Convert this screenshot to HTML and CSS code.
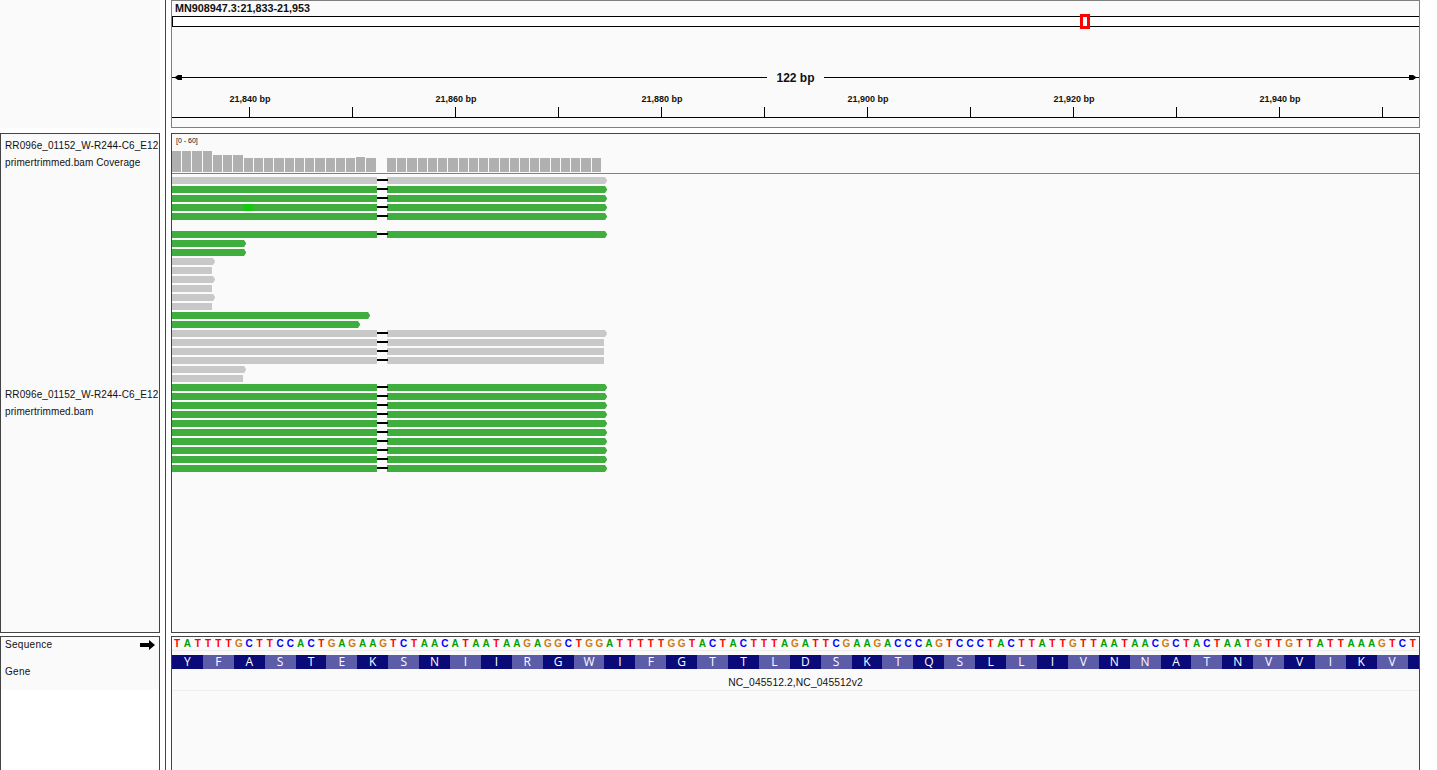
FILE: index.html
```html
<!DOCTYPE html>
<html>
	<head>
		<meta charset="utf-8"/>
		<title>MN908947.3:21,833-21,953</title>
		<link rel="stylesheet" href="styles.css">
	</head>
	<body>
		<div id="app">
			<div id="nameCol">
				<div class="namePanel headerName"></div>
				<div class="namePanel mainName">
					<div class="trackName coverageName">
						<div class="nameClip">RR096e_01152_W-R244-C6_E12</div>
						<div class="nameClip">primertrimmed.bam Coverage</div>
					</div>
					<div class="trackName readsName">
						<div class="nameClip">RR096e_01152_W-R244-C6_E12</div>
						<div class="nameClip">primertrimmed.bam</div>
					</div>
				</div>
				<div class="namePanel bottomName">
					<div class="bottomLabels">
						<div class="seqName">
							<span>Sequence</span>
							<svg class="strandArrow" width="15" height="10" viewBox="0 0 15 10"><path d="M0 3H9V0L15 5L9 10V7H0Z"/></svg>
						</div>
						<div class="geneName">Gene</div>
					</div>
				</div>
			</div>
			<div id="divider"></div>
			<div id="dataCol">
				<div class="dataPanel headerPanel">
					<div class="locus">MN908947.3:21,833-21,953</div>
					<div class="ideogram"><div class="ideogramBox"></div></div>
					<div class="span">
						<svg class="spanEnd" width="10" height="7" viewBox="0 0 10 7"><path d="M0 3H3L6 1H10V6H6L3 4H0Z"/></svg>
						<div class="spanLine"></div>
						<div class="spanLabel">122 bp</div>
						<div class="spanLine"></div>
						<svg class="spanEnd" width="10" height="7" viewBox="0 0 10 7"><path d="M10 3H7L4 1H0V6H4L7 4H10Z"/></svg>
					</div>
					<div class="rulerLabels">
						<div class="rulerLabel">21,840 bp</div>
						<div class="rulerLabel">21,860 bp</div>
						<div class="rulerLabel">21,880 bp</div>
						<div class="rulerLabel">21,900 bp</div>
						<div class="rulerLabel">21,920 bp</div>
						<div class="rulerLabel">21,940 bp</div>
					</div>
					<div class="rulerTicks">
						<div class="tick"></div><div class="tick"></div><div class="tick"></div><div class="tick"></div>
						<div class="tick"></div><div class="tick"></div><div class="tick"></div><div class="tick"></div>
						<div class="tick"></div><div class="tick"></div><div class="tick"></div><div class="tick"></div>
					</div>
				</div>
				<div class="dataPanel mainPanel">
					<div class="coverage">
						<div class="coverageRange">[0 - 60]</div>
						<div id="coverageBars"></div>
					</div>
					<div id="reads"></div>
				</div>
				<div class="dataPanel bottomPanel">
					<div id="sequence"></div>
					<div id="aminoAcids"></div>
					<div class="geneTrack">NC_045512.2,NC_045512v2</div>
				</div>
			</div>
		</div>
		<script src="tracks.js"></script>
	</body>
</html>
```

FILE: styles.css
```css
/*main layout*/
html, body{
	margin: 0;
	padding: 0;
	height: 100%;
	overflow: hidden;
	background-color: #ffffff;
}
#app{
	display: flex;
	height: 770px;
	overflow: hidden;
	font-family: "Liberation Sans", Arial, sans-serif;
	color: #111111;
}
#nameCol{
	width: 160px;
	flex: none;
}
#divider{
	width: 1px;
	flex: none;
	margin: 0 5px;
	background-color: #444444;
}
#dataCol{
	width: 1249px;
	flex: none;
}

/*panels*/
.namePanel, .dataPanel{
	box-sizing: border-box;
}
.namePanel{
	background-color: #fafafa;
}
.dataPanel{
	background-color: #fafafa;
	border: solid 1px #444444;
}
.headerName{
	height: 128px;
	margin-bottom: 5px;
}
.mainName{
	display: flex;
	flex-direction: column;
	height: 500px;
	margin-bottom: 3px;
	border: solid 1px #444444;
}
.bottomName{
	height: 136px;
	background-color: #ffffff;
	border: solid 1px #444444;
}
.headerPanel{
	height: 128px;
	margin-bottom: 5px;
	border-color: #808080;
}
.mainPanel{
	height: 500px;
	margin-bottom: 3px;
}
.bottomPanel{
	height: 136px;
}

/*track names*/
.trackName{
	display: flex;
	flex-direction: column;
	justify-content: center;
	padding-left: 4px;
	font-size: 10px;
	letter-spacing: 0.1px;
	line-height: 17px;
}
.coverageName{
	height: 39px;
}
.readsName{
	flex: 1;
}
.nameClip{
	white-space: nowrap;
	overflow: hidden;
}
.bottomLabels{
	height: 53px;
	padding: 0 4px;
	background-color: #fafafa;
	font-size: 10px;
	letter-spacing: 0.3px;
}
.seqName{
	display: flex;
	justify-content: space-between;
	align-items: flex-start;
	height: 26px;
	padding-top: 2px;
	line-height: 12px;
	box-sizing: border-box;
}
.strandArrow{
	margin-top: 1px;
}
.geneName{
	line-height: 12px;
	padding-top: 3px;
}

/*header: locus, ideogram, span, ruler*/
.locus{
	height: 15px;
	padding-left: 3px;
	font-size: 10.8px;
	font-weight: bold;
	line-height: 14px;
}
.ideogram{
	position: relative;
	box-sizing: border-box;
	height: 11px;
	background-color: #ffffff;
	border-top: solid 1px #000000;
	border-bottom: solid 1px #000000;
	border-left: solid 1px #000000;
}
.ideogramBox{
	position: absolute;
	left: 907px;
	top: -3px;
	box-sizing: border-box;
	width: 10px;
	height: 15px;
	border: solid 3px #ff0000;
}
.span{
	display: flex;
	align-items: center;
	height: 15px;
	margin-top: 43px;
}
.spanEnd{
	flex: none;
}
.spanLine{
	flex: 1;
	height: 1px;
	background-color: #000000;
}
.spanLabel{
	width: 57px;
	flex: none;
	text-align: center;
	font-size: 12px;
	font-weight: bold;
}
.rulerLabels{
	display: flex;
	height: 11px;
	margin-top: 9px;
	margin-left: -26px;
	padding-left: 1px;
}
.rulerLabel{
	width: 206px;
	flex: none;
	text-align: center;
	font-size: 9px;
	font-weight: bold;
	line-height: 11px;
}
.rulerTicks{
	display: flex;
	box-sizing: border-box;
	height: 11px;
	margin-top: 2px;
	padding-left: 77px;
	border-bottom: solid 1px #000000;
}
.tick{
	width: 103px;
	flex: none;
	box-sizing: border-box;
	height: 10px;
	border-left: solid 1px #000000;
}

/*coverage*/
.coverage{
	display: flex;
	flex-direction: column;
	box-sizing: border-box;
	height: 40px;
	padding-bottom: 1px;
	border-bottom: solid 1px #808080;
}
.coverageRange{
	height: 10px;
	padding: 2px 0 0 4px;
	font-size: 7px;
	line-height: 9px;
}
#coverageBars{
	display: flex;
	align-items: flex-end;
	gap: 1px;
	flex: 1;
}
.covBar{
	width: 9.24px;
	flex: none;
	background-color: #b0b0b0;
}

/*reads*/
#reads{
	padding-top: 3px;
}
.read{
	display: flex;
	height: 7px;
	margin-bottom: 2px;
}
.seg{
	position: relative;
	height: 7px;
	flex: none;
}
.green .seg{ background-color: #3fae3f;}
.gray .seg{ background-color: #c8c8c8;}
.green .tip{ background-color: #3fae3f;}
.gray .tip{ background-color: #c8c8c8;}
.tip{
	width: 3px;
	height: 7px;
	flex: none;
	clip-path: polygon(0 0, 34% 0, 100% 43%, 100% 57%, 34% 100%, 0 100%);
}
.gapLine{
	position: relative;
	z-index: 1;
	width: 11px;
	height: 2px;
	flex: none;
	margin: 2px -1px 0 0;
	background-color: #000000;
}
.mismatch{
	position: absolute;
	left: 71px;
	top: 0;
	width: 10px;
	height: 7px;
	background-color: #12c912;
}

/*sequence and amino acids*/
#sequence{
	display: flex;
	box-sizing: border-box;
	height: 14px;
	padding-top: 1px;
	border-bottom: solid 1px #eeeeee;
	font-size: 10px;
	font-weight: bold;
	line-height: 12px;
}
.base{
	width: 10.3px;
	flex: none;
	text-align: center;
}
.baseT{ color: #ff0000;}
.baseA{ color: #00a000;}
.baseC{ color: #0000ff;}
.baseG{ color: #d17a10;}
#aminoAcids{
	display: flex;
	height: 14px;
	margin-top: 4px;
	font-family: "Open Sans", sans-serif;
	font-size: 12px;
	line-height: 14px;
	color: #ffffff;
}
.aa{
	width: 30.9px;
	flex: none;
	text-align: center;
	background-color: #5c5ca8;
}
.aa:nth-child(odd){
	background-color: #0a0a78;
}
.aa:last-child{
	flex: 1;
}
.geneTrack{
	box-sizing: border-box;
	height: 22px;
	border-bottom: solid 1px #eeeeee;
	text-align: center;
	font-size: 10.3px;
	letter-spacing: 0.1px;
	line-height: 28px;
}
```

FILE: tracks.js
```js
var sequence = "TATTTTGCTTCCACTGAGAAGTCTAACATAATAAGAGGCTGGATTTTTGGTACTACTTTAGATTCGAAGACCCAGTCCCTACTTATTGTTAATAACGCTACTAATGTTGTTATTAAAGTCT";
var aminoAcids = "YFASTEKSNIIRGWIFGTTLDSKTQSLLIVNNATNVVIKV";

// bar heights per bp, 0 is the deletion
var coverage = [21,21,21,21,17,17,17,14,14,14,14,14,14,14,14,14,14,14,15,14,0,
	14,14,14,14,14,14,14,14,14,14,14,14,14,14,14,14,14,14,14,14,14];

// color, left length (spliced reads have a right part too), pointed end
var reads = [
	["gray", "long", true],
	["green", "long", true],
	["green", "long", true],
	["green", "long", true, true],
	["green", "long", true],
	null,
	["green", "long", true],
	["green", 71, true],
	["green", 71, true],
	["gray", 40, true],
	["gray", 40, false],
	["gray", 40, true],
	["gray", 40, false],
	["gray", 40, true],
	["gray", 40, false],
	["green", 195, true],
	["green", 185, true],
	["gray", "long", true],
	["gray", "long", false],
	["gray", "long", false],
	["gray", "long", false],
	["gray", 71, true],
	["gray", 71, false]
];
for(var g = 0; g < 10; g++){
	reads.push(["green", "long", true]);
}

function addDiv(parent, className, text){
	var el = document.createElement("div");
	el.className = className;
	if(text){
		el.textContent = text;
	}
	parent.appendChild(el);
	return el;
}

function addSeg(row, width){
	var seg = addDiv(row, "seg");
	seg.style.width = width + "px";
	return seg;
}

var barHolder = document.getElementById("coverageBars");
coverage.forEach(function(h){
	var bar = addDiv(barHolder, "covBar");
	bar.style.height = h + "px";
	if(h === 0){
		bar.style.background = "none";
	}
});

var readHolder = document.getElementById("reads");
reads.forEach(function(r){
	var row = addDiv(readHolder, "read");
	if(!r){
		return;
	}
	row.className = "read " + r[0];
	if(r[1] === "long"){
		var left = addSeg(row, 205);
		if(r[3]){
			addDiv(left, "mismatch");
		}
		addDiv(row, "gapLine");
		addSeg(row, 217);
	}else{
		addSeg(row, r[1]);
	}
	if(r[2]){
		addDiv(row, "tip");
	}
});

var seqHolder = document.getElementById("sequence");
sequence.split("").forEach(function(b){
	addDiv(seqHolder, "base base" + b, b);
});

var aaHolder = document.getElementById("aminoAcids");
aminoAcids.split("").forEach(function(a){
	addDiv(aaHolder, "aa", a);
});
addDiv(aaHolder, "aa");
```
